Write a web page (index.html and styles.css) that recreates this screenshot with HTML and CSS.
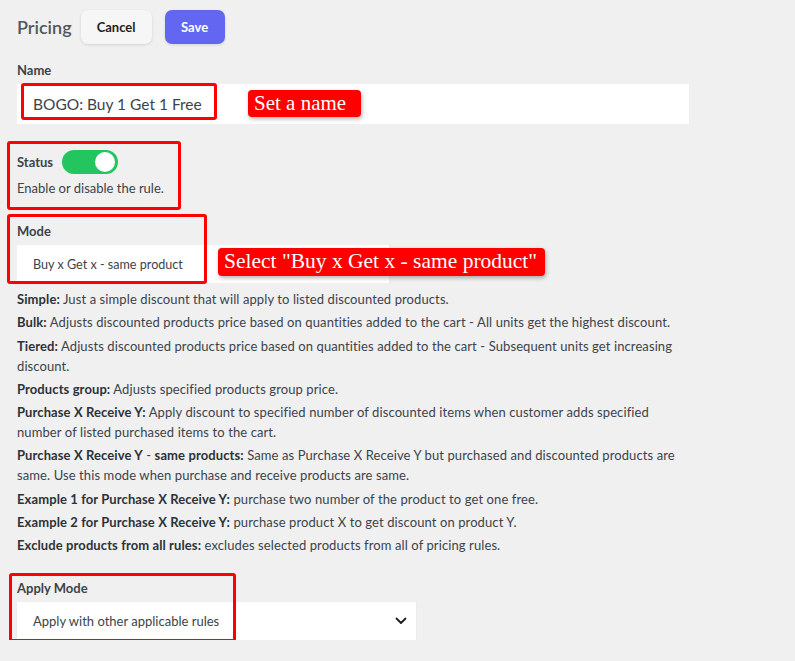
FILE: index.html
```
<!DOCTYPE html>
<html lang="en">
<head>
    <meta charset="UTF-8">
    <meta name="viewport" content="width=device-width, initial-scale=1.0">
    <title>Pricing</title>
    <link rel="stylesheet" href="styles.css">
</head>
<body>
    <div class="page">
        <!-- header -->
        <div class="header">
            <h1>Pricing</h1>
            <button class="btn btn-cancel">Cancel</button>
            <button class="btn btn-save">Save</button>
        </div>

        <!-- name -->
        <div class="field field-name">
            <label class="label">Name</label>
            <div class="text-input">BOGO: Buy 1 Get 1 Free</div>
            <span class="mark mark-name"></span>
            <span class="callout callout-name">Set a name</span>
        </div>

        <!-- status -->
        <div class="field field-status">
            <div class="status-row">
                <span class="label">Status</span>
                <span class="toggle"><span class="knob"></span></span>
            </div>
            <p class="help">Enable or disable the rule.</p>
            <span class="mark mark-status"></span>
        </div>

        <!-- mode -->
        <div class="field field-mode">
            <label class="label">Mode</label>
            <div class="select select-mode">Buy x Get x - same product</div>
            <span class="mark mark-mode"></span>
            <span class="callout callout-mode">Select "Buy x Get x - same product"</span>
        </div>

        <div class="desc">
            <p><b>Simple:</b> Just a simple discount that will apply to listed discounted products.</p>
            <p><b>Bulk:</b> Adjusts discounted products price based on quantities added to the cart - All units get the highest discount.</p>
            <p><b>Tiered:</b> Adjusts discounted products price based on quantities added to the cart - Subsequent units get increasing discount.</p>
            <p><b>Products group:</b> Adjusts specified products group price.</p>
            <p><b>Purchase X Receive Y:</b> Apply discount to specified number of discounted items when customer adds specified number of listed purchased items to the cart.</p>
            <p><b>Purchase X Receive Y</b> - <b>same products:</b> Same as Purchase X Receive Y but purchased and discounted products are same. Use this mode when purchase and receive products are same.</p>
            <p><b>Example 1 for Purchase X Receive Y:</b> purchase two number of the product to get one free.</p>
            <p><b>Example 2 for Purchase X Receive Y:</b> purchase product X to get discount on product Y.</p>
            <p><b>Exclude products from all rules:</b> excludes selected products from all of pricing rules.</p>
        </div>

        <!-- apply mode -->
        <div class="field field-apply">
            <label class="label">Apply Mode</label>
            <div class="select select-apply">
                <span>Apply with other applicable rules</span>
                <svg class="chevron" width="12" height="8" viewBox="0 0 12 8"><polyline points="1.5,1.5 6,6 10.5,1.5" fill="none" stroke="#1e1e1e" stroke-width="1.8" stroke-linecap="round" stroke-linejoin="round"/></svg>
            </div>
            <span class="mark mark-apply"></span>
        </div>
    </div>
</body>
</html>
```

FILE: styles.css
```
body {
    margin: 0;
    background-color: #f0f0f0;
    font-family: Lato, "Noto Sans", Arial, sans-serif;
    font-size: 13px;
    color: #3c434a;
}
.page {
    padding: 10px 0 0 17px;
    width: 672px;
}
.header {
    display: flex;
    align-items: center;
    height: 34px;
}
h1 {
    margin: 0 9px 0 0;
    font-size: 18px;
    font-weight: 600;
    color: #50575e;
}
.btn {
    height: 34px;
    border: none;
    border-radius: 7px;
    font-family: inherit;
    font-size: 13px;
    font-weight: 700;
    cursor: pointer;
}
.btn-cancel {
    width: 71px;
    background-color: #f6f6f6;
    color: #1e1e1e;
    box-shadow: 0 1px 3px rgba(0,0,0,0.12);
    margin-right: 13px;
}
.btn-save {
    width: 60px;
    background-color: #6366f1;
    color: white;
    box-shadow: 0 1px 3px rgba(0,0,0,0.12);
}
.field {
    position: relative;
}
.label {
    display: block;
    font-weight: 700;
    line-height: 20px;
    color: #3c434a;
}
.field-name {
    margin-top: 16px;
}
.field-name .label {
    margin-bottom: 4px;
}
.text-input {
    height: 40px;
    background-color: white;
    display: flex;
    align-items: center;
    padding-left: 16px;
    font-size: 15.5px;
    color: #3c434a;
}
.field-status {
    margin-top: 26px;
}
.status-row {
    display: flex;
    align-items: center;
    gap: 9px;
    height: 24px;
}
.toggle {
    width: 56px;
    height: 24px;
    border-radius: 12px;
    background-color: #22c55e;
    display: flex;
    align-items: center;
    justify-content: flex-end;
    padding-right: 3px;
    box-sizing: border-box;
}
.knob {
    width: 20px;
    height: 20px;
    border-radius: 50%;
    background-color: white;
}
.help {
    margin: 4px 0 0;
    line-height: 20px;
}
.field-mode {
    margin-top: 23px;
}
.field-mode .label,
.field-apply .label {
    margin-bottom: 4px;
}
.select {
    height: 38px;
    background-color: white;
    display: flex;
    align-items: center;
    justify-content: space-between;
    padding: 0 16px;
    box-sizing: border-box;
    color: #3c434a;
}
.select-mode {
    width: 372px;
    font-size: 12.6px;
}
.select-apply {
    width: 399px;
    padding-right: 9px;
    box-shadow: 0 1px 2px rgba(0,0,0,0.06);
}
.desc {
    margin-top: 6px;
    letter-spacing: 0.1px;
}
.desc p {
    margin: 0 0 3.3px;
    line-height: 20px;
}
.desc b {
    color: #2c3338;
}
.field-apply {
    margin-top: 23px;
}

/* annotation overlays */
.mark {
    position: absolute;
    border: 3px solid #f00;
    border-radius: 3px;
    box-sizing: border-box;
}
.mark-name {
    left: 4px;
    top: 23px;
    width: 196px;
    height: 37px;
}
.mark-status {
    left: -10px;
    top: -9px;
    width: 174px;
    height: 69px;
}
.mark-mode {
    left: -10px;
    top: -7px;
    width: 200px;
    height: 70px;
}
.mark-apply {
    left: -8px;
    top: -5px;
    width: 227px;
    height: 69px;
}
.callout {
    position: absolute;
    background-color: #f00;
    color: white;
    font-family: "Liberation Serif", "Times New Roman", serif;
    border-radius: 4px;
    box-shadow: 1px 2px 4px rgba(0,0,0,0.3);
    white-space: nowrap;
    box-sizing: border-box;
    padding-left: 6px;
}
.callout-name {
    left: 231px;
    top: 30px;
    width: 113px;
    height: 27px;
    font-size: 21px;
    line-height: 26px;
}
.callout-mode {
    left: 201px;
    top: 27px;
    width: 327px;
    height: 28px;
    font-size: 21.5px;
    line-height: 27px;
}
```
